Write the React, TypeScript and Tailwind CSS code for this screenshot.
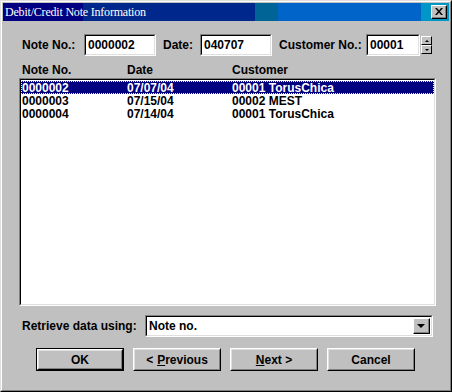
import React from "react";

const raised =
  "border border-t-white border-l-white border-r-black border-b-black";
const sunken =
  "border border-t-[#808080] border-l-[#808080] border-r-white border-b-white";
const sunkenInner =
  "border border-t-black border-l-black border-r-[#dfdfdf] border-b-[#dfdfdf]";

const rows = [
  { no: "0000002", date: "07/07/04", customer: "00001 TorusChica" },
  { no: "0000003", date: "07/15/04", customer: "00002 MEST" },
  { no: "0000004", date: "07/14/04", customer: "00001 TorusChica" },
];

function TextBox({ value, width }: { value: string; width: string }) {
  return (
    <div className={`${sunken} ${width} h-[22px] shrink-0`}>
      <div className={`${sunkenInner} h-full bg-white pl-[2px] leading-[18px]`}>{value}</div>
    </div>
  );
}

function Button({ children, isDefault }: { children: React.ReactNode; isDefault?: boolean }) {
  return (
    <div className={`w-[88px] h-[23px] shrink-0 ${isDefault ? "border border-black" : ""}`}>
      <div className={`${raised} h-full`}>
        <div className="h-full border border-t-[#dfdfdf] border-l-[#dfdfdf] border-r-[#808080] border-b-[#808080] flex items-center justify-center">
          {children}
        </div>
      </div>
    </div>
  );
}

export default function App() {
  return (
    <div
      className="w-[452px] h-[392px] bg-[#c0c0c0] text-black"
      style={{ fontFamily: '"Liberation Sans", Arial, sans-serif' }}
    >
      <div className="h-full border border-t-[#dfdfdf] border-l-[#dfdfdf] border-r-black border-b-black">
        <div className="h-full border border-t-white border-l-white border-r-[#808080] border-b-[#808080] p-[1px] flex flex-col">
          {/* Title bar */}
          <div className="h-[18px] flex relative">
            <div className="w-[80px] bg-[#000080]" />
            <div className="w-[172px] bg-[#00288c]" />
            <div className="w-[23px] bg-[#006496]" />
            <div className="flex-1 bg-[#0064c8]" />
            <div className="w-[28px] bg-[#0096c8]" />
            <span
              className="absolute left-[2px] top-0 text-white text-[12px] leading-[18px] tracking-[-0.2px]"
              style={{ fontFamily: '"Liberation Serif", "Times New Roman", serif' }}
            >
              Debit/Credit Note Information
            </span>
            <div className="absolute right-[2px] top-[2px] w-[16px] h-[14px] bg-[#c0c0c0] border border-t-white border-l-white border-r-black border-b-black">
              <div className="h-full border-r border-b border-[#808080] flex items-center justify-center">
                <svg width="8" height="7" viewBox="0 0 8 7">
                  <path d="M0 0h2l2 2.5L6 0h2L5 3.5 8 7H6L4 4.5 2 7H0l3-3.5z" fill="black" />
                </svg>
              </div>
            </div>
          </div>

          <div className="px-[16px] text-[12px] font-bold">
            {/* Top fields */}
            <div className="flex items-center mt-[13px] h-[22px]">
              <span className="w-[65px] shrink-0 pl-[3px]">Note No.:</span>
              <TextBox value="0000002" width="w-[72px]" />
              <span className="ml-[7px] w-[37px] shrink-0">Date:</span>
              <TextBox value="040707" width="w-[72px]" />
              <span className="ml-[7px] w-[87px] shrink-0">Customer No.:</span>
              <TextBox value="00001" width="w-[54px]" />
              <div className="ml-[1px] w-[11px] h-[18px] shrink-0 flex flex-col">
                <div className={`${raised} bg-[#c0c0c0] flex-1 flex items-center justify-center`}>
                  <div className="w-0 h-0 border-l-[2px] border-r-[2px] border-b-[2px] border-l-transparent border-r-transparent border-b-black" />
                </div>
                <div className={`${raised} bg-[#c0c0c0] flex-1 flex items-center justify-center`}>
                  <div className="w-0 h-0 border-l-[2px] border-r-[2px] border-t-[2px] border-l-transparent border-r-transparent border-t-black" />
                </div>
              </div>
            </div>

            {/* List header */}
            <div className="flex mt-[7px] h-[15px] leading-[15px] pl-[3px]">
              <span className="w-[105px]">Note No.</span>
              <span className="w-[105px]">Date</span>
              <span>Customer</span>
            </div>

            {/* List box */}
            <div className={`${sunken} w-[417px] h-[228px]`}>
              <div className={`${sunkenInner} h-full bg-white pt-[1px]`}>
                {rows.map((r, i) => (
                  <div
                    key={r.no}
                    className={`flex h-[13px] leading-[12px] ${
                      i === 0 ? "bg-[#000080] text-white border border-dotted border-[#ffff80]" : "border border-transparent"
                    }`}
                  >
                    <span className="w-[105px]">{r.no}</span>
                    <span className="w-[105px]">{r.date}</span>
                    <span>{r.customer}</span>
                  </div>
                ))}
              </div>
            </div>

            {/* Retrieve */}
            <div className="flex items-center mt-[9px] h-[22px]">
              <span className="w-[126px] shrink-0 pl-[3px]">Retrieve data using:</span>
              <div className={`${sunken} w-[290px] h-[22px]`}>
                <div className={`${sunkenInner} h-full bg-white flex items-center justify-between pl-[2px] pr-[1px]`}>
                  <span>Note no.</span>
                  <div className={`${raised} w-[17px] h-[16px] bg-[#c0c0c0]`}>
                    <div className="h-full border-r border-b border-[#808080] flex items-center justify-center">
                      <div className="w-0 h-0 border-l-[4px] border-r-[4px] border-t-[4px] border-l-transparent border-r-transparent border-t-black" />
                    </div>
                  </div>
                </div>
              </div>
            </div>

            {/* Buttons */}
            <div className="flex mt-[11px] pl-[17px] gap-[9px]">
              <Button isDefault>OK</Button>
              <Button>
                &lt; <span className="underline ml-[4px]">P</span>revious
              </Button>
              <Button>
                <span className="underline">N</span>ext &gt;
              </Button>
              <Button>Cancel</Button>
            </div>
          </div>
        </div>
      </div>
    </div>
  );
}
